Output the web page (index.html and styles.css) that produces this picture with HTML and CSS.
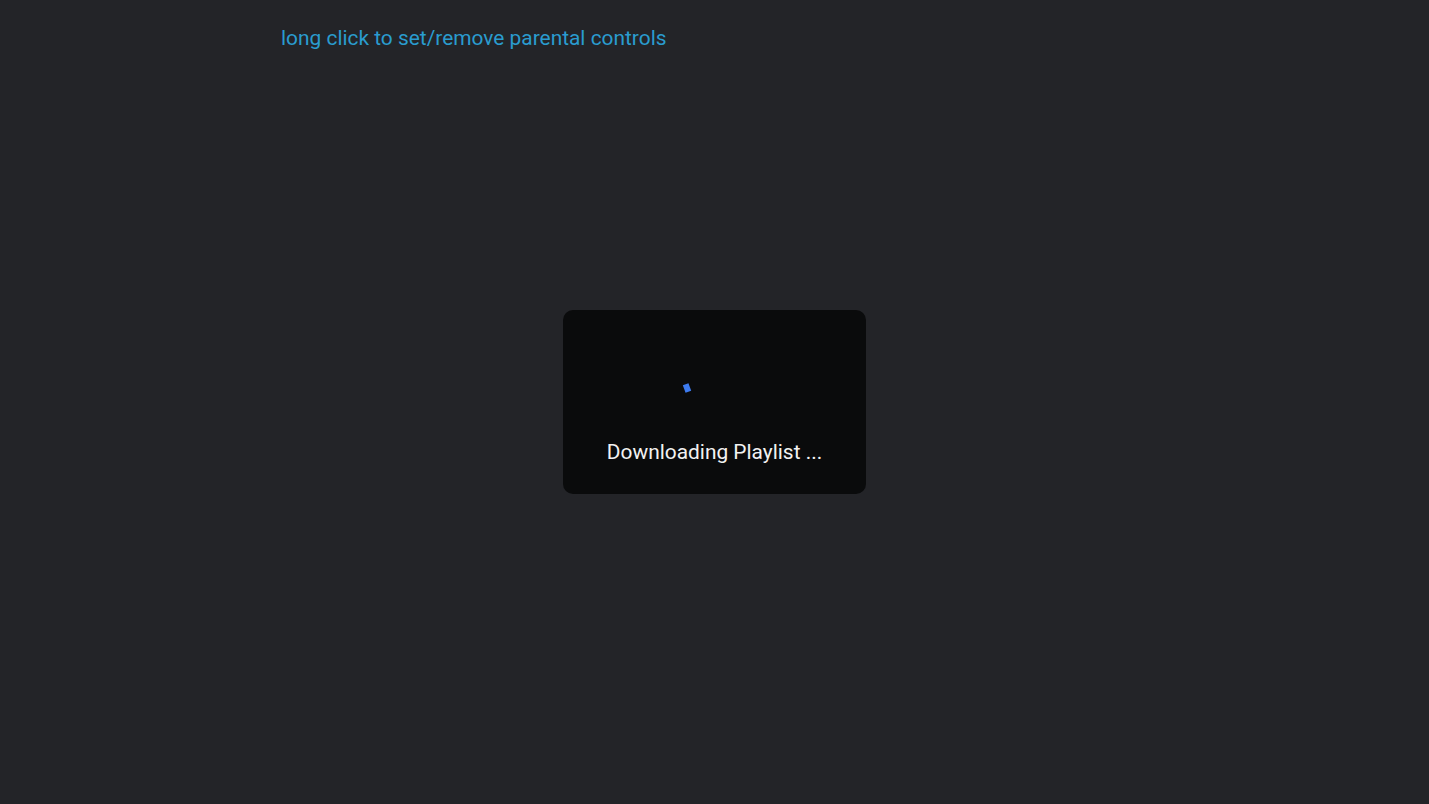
FILE: index.html
```html
<!DOCTYPE html>
<html>
<head>
<meta charset="utf-8">
<link rel="stylesheet" href="styles.css">
</head>
<body>
<header class="hint">long click to set/remove parental controls</header>
<div class="overlay">
  <div class="dialog">
    <svg class="spinner" width="60" height="60" viewBox="0 0 60 60">
      <rect x="-3" y="-4" width="6" height="8" fill="#3d7bf0" transform="translate(2 40) rotate(-20)"/>
    </svg>
    <div class="label">Downloading Playlist ...</div>
  </div>
</div>
</body>
</html>
```
FILE: styles.css
```css
html, body {
  margin: 0;
  padding: 0;
  height: 100%;
}
body {
  background: #232428;
  font-family: Roboto, "Noto Sans", sans-serif;
  overflow: hidden;
}
.hint {
  padding: 26px 0 0 281px;
  font-size: 20.9px;
  line-height: 25px;
  color: #2a9ccf;
}
.overlay {
  position: fixed;
  inset: 0;
  display: flex;
  align-items: center;
  justify-content: center;
}
.dialog {
  width: 303px;
  height: 184px;
  box-sizing: border-box;
  padding-top: 38px;
  background: #0a0b0c;
  border-radius: 10px;
  display: flex;
  flex-direction: column;
  align-items: center;
}
.spinner {
  display: block;
  overflow: visible;
}
.label {
  margin-top: 32px;
  font-size: 20.9px;
  line-height: 25px;
  color: #f2f2f2;
}
```
